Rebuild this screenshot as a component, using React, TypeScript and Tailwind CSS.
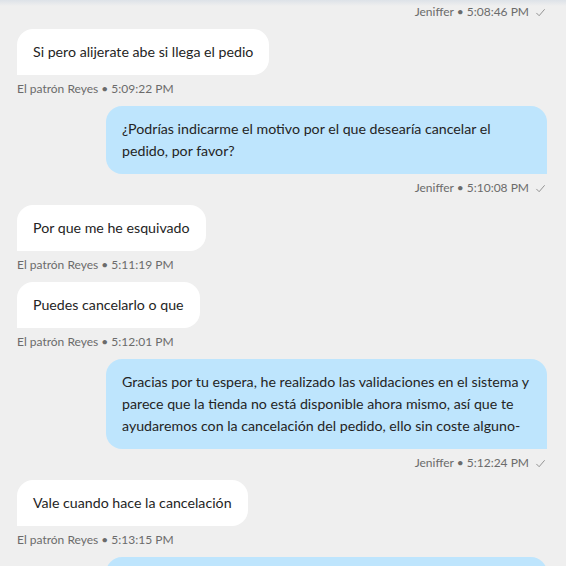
import React from 'react';

type Msg = { from: 'agent' | 'client'; text: string; author: string; time: string };

const messages: Msg[] = [
  { from: 'client', text: 'Si pero alijerate abe si llega el pedio', author: 'El patrón Reyes', time: '5:09:22 PM' },
  {
    from: 'agent',
    text: '¿Podrías indicarme el motivo por el que desearía cancelar el pedido, por favor?',
    author: 'Jeniffer',
    time: '5:10:08 PM',
  },
  { from: 'client', text: 'Por que me he esquivado', author: 'El patrón Reyes', time: '5:11:19 PM' },
  { from: 'client', text: 'Puedes cancelarlo o que', author: 'El patrón Reyes', time: '5:12:01 PM' },
  {
    from: 'agent',
    text: 'Gracias por tu espera, he realizado las validaciones en el sistema y parece que la tienda no está disponible ahora mismo, así que te ayudaremos con la cancelación del pedido, ello sin coste alguno-',
    author: 'Jeniffer',
    time: '5:12:24 PM',
  },
  { from: 'client', text: 'Vale cuando hace la cancelación', author: 'El patrón Reyes', time: '5:13:15 PM' },
  {
    from: 'agent',
    text: 'La cancelación ya quedó registrada, en unos minutos recibirás la confirmación.',
    author: 'Jeniffer',
    time: '5:14:02 PM',
  },
];

const Tick = () => (
  <svg width="11" height="11" viewBox="0 0 12 12" className="ml-[6px]">
    <path d="M1.5 6.5 L4.5 9.5 L10.5 2.5" fill="none" stroke="#8a8a8a" strokeWidth="1" />
  </svg>
);

const Meta = ({ author, time, right }: { author: string; time: string; right: boolean }) => (
  <div
    className={`flex items-center h-4 text-[12px] text-[#6b6b6b] ${right ? 'justify-end pr-[1px]' : 'justify-start'}`}
  >
    <span>
      {author} • {time}
    </span>
    {right && <Tick />}
  </div>
);

export default function App() {
  return (
    <div
      className="relative h-[566px] w-[566px] overflow-hidden bg-[#efefef] text-[#242424]"
      style={{ fontFamily: 'Lato, "Noto Sans", sans-serif' }}
    >
      <div className="absolute inset-x-0 top-0 h-[6px] bg-gradient-to-b from-[#dde2e8] to-[#efefef00]" />
      <div className="flex flex-col pl-[17px] pr-[19px] pt-[4px]">
        <div className="mb-[9px]">
          <Meta author="Jeniffer" time="5:08:46 PM" right />
        </div>
        {messages.map((m, i) => {
          const agent = m.from === 'agent';
          return (
            <div key={i} className={`flex flex-col mb-[9px] ${agent ? 'items-end' : 'items-start'}`}>
              <div
                className={`max-w-[441px] px-4 py-3 text-[14.2px] leading-[22px] ${
                  agent
                    ? 'bg-[#bee5fd] rounded-tl-[16px] rounded-tr-[16px] rounded-bl-[16px]'
                    : 'bg-white rounded-tl-[16px] rounded-tr-[16px] rounded-br-[16px]'
                }`}
              >
                {m.text}
              </div>
              <div className="mt-[6px] w-full">
                <Meta author={m.author} time={m.time} right={agent} />
              </div>
            </div>
          );
        })}
      </div>
    </div>
  );
}
